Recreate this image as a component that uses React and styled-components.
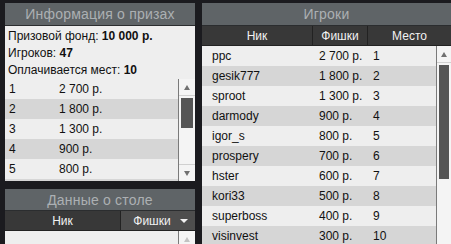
import React from "react";
import styled, { createGlobalStyle } from "styled-components";

const Global = createGlobalStyle`
  html, body { margin: 0; padding: 0; background: #1b1b1f; overflow: hidden; }
  body { font-family: "Liberation Sans", Arial, sans-serif; font-size: 12px; color: #111; }
  * { box-sizing: border-box; }
`;

const Page = styled.div`
  display: flex;
  gap: 7px;
  padding: 3px 0 0 5px;
  width: 451px;
  height: 244px;
  overflow: hidden;
`;

const LeftCol = styled.div`
  width: 190px;
  display: flex;
  flex-direction: column;
  gap: 8px;
  flex-shrink: 0;
  min-height: 0;
`;

const Panel = styled.div`
  display: flex;
  flex-direction: column;
  flex: ${(p) => (p.$grow ? "1 1 0" : "none")};
  min-width: 0;
  min-height: 0;
`;

const Header = styled.div`
  flex: none;
  height: ${(p) => p.$h || 23}px;
  background: #5f6467;
  color: #acb0b3;
  font-size: 14px;
  display: flex;
  align-items: center;
  justify-content: center;
  border-bottom: 1px solid #2b2d2f;
  letter-spacing: 0.2px;
`;

const Info = styled.div`
  flex: none;
  background: #eeeeee;
  padding: 2px 0 0 3px;
`;

const InfoLine = styled.div`
  height: 17px;
  line-height: 17px;
  b { font-weight: bold; }
`;

const ListArea = styled.div`
  display: flex;
  height: ${(p) => (p.$h ? p.$h + "px" : "auto")};
  flex: ${(p) => (p.$grow ? "1 1 0" : "none")};
  min-height: 0;
  background: #eeeeee;
  overflow: hidden;
`;

const Rows = styled.div`
  flex: 1;
  display: flex;
  flex-direction: column;
`;

const Row = styled.div`
  flex: none;
  display: grid;
  grid-template-columns: ${(p) => p.$cols};
  height: ${(p) => p.$h || 20}px;
  align-items: center;
  background: ${(p) => (p.$alt ? "#d6d6d6" : "#eeeeee")};
`;

const Cell = styled.div`
  padding-left: ${(p) => p.$pl || 0}px;
  white-space: nowrap;
`;

const Scroll = styled.div`
  width: ${(p) => p.$w}px;
  flex: none;
  border-left: 1px solid #7a7a7a;
  background: #f4f4f4;
  display: flex;
  flex-direction: column;
  align-items: center;
`;

const ArrowBtn = styled.div`
  flex: none;
  width: 100%;
  height: 17px;
  display: flex;
  align-items: center;
  justify-content: center;
  border-${(p) => (p.$down ? "top" : "bottom")}: 1px solid #d0d0d0;
  &::after {
    content: "";
    width: 0;
    height: 0;
    border-left: 3px solid transparent;
    border-right: 3px solid transparent;
    ${(p) => (p.$down ? "border-top" : "border-bottom")}: 5px solid ${(p) => (p.$off ? "#c2c2c2" : "#707070")};
  }
`;

const Track = styled.div`
  flex: 1;
  width: 100%;
  padding: 2px 2px 0 2px;
`;

const Thumb = styled.div`
  height: ${(p) => p.$h}px;
  background: #555555;
`;

const ColHead = styled.div`
  flex: none;
  display: grid;
  grid-template-columns: ${(p) => p.$cols};
  height: 20px;
  background: #383838;
  border-bottom: 1px solid #222;
  color: #f2f2f2;
  font-size: 12px;
`;

const HeadCell = styled.div`
  display: flex;
  align-items: center;
  justify-content: center;
  position: relative;
  background: ${(p) => (p.$active ? "#4e4e4e" : "transparent")};
  border-left: ${(p) => (p.$sep ? "1px solid #222" : "none")};
  padding-right: ${(p) => (p.$active ? 12 : 0)}px;
`;

const SortMark = styled.span`
  position: absolute;
  right: 7px;
  top: 8px;
  width: 0;
  height: 0;
  border-left: 4px solid transparent;
  border-right: 4px solid transparent;
  border-top: 4px solid #f2f2f2;
`;

const prizes = ["2 700 р.", "1 800 р.", "1 300 р.", "900 р.", "800 р."];
const players = [
  ["ppc", "2 700 р.", "1"],
  ["gesik777", "1 800 р.", "2"],
  ["sproot", "1 300 р.", "3"],
  ["darmody", "900 р.", "4"],
  ["igor_s", "800 р.", "5"],
  ["prospery", "700 р.", "6"],
  ["hster", "600 р.", "7"],
  ["kori33", "500 р.", "8"],
  ["superboss", "400 р.", "9"],
  ["visinvest", "300 р.", "10"],
];

export default function App() {
  return (
    <>
      <Global />
      <Page>
        <LeftCol>
          <Panel>
            <Header>Информация о призах</Header>
            <Info>
              <InfoLine>Призовой фонд: <b>10 000 р.</b></InfoLine>
              <InfoLine>Игроков: <b>47</b></InfoLine>
              <InfoLine>Оплачивается мест: <b>10</b></InfoLine>
            </Info>
            <ListArea $h={102}>
              <Rows>
                {prizes.map((p, i) => (
                  <Row key={i} $alt={i % 2 === 1} $cols="54px 1fr">
                    <Cell $pl={4}>{i + 1}</Cell>
                    <Cell>{p}</Cell>
                  </Row>
                ))}
                <Row $alt $h={2} $cols="1fr" />
              </Rows>
              <Scroll $w={17}>
                <ArrowBtn />
                <Track><Thumb $h={30} /></Track>
                <ArrowBtn $down />
              </Scroll>
            </ListArea>
          </Panel>
          <Panel $grow>
            <Header $h={22}>Данные о столе</Header>
            <ColHead $cols="115px 1fr">
              <HeadCell>Ник</HeadCell>
              <HeadCell $sep $active>Фишки<SortMark /></HeadCell>
            </ColHead>
            <ListArea $grow>
              <Rows />
              <Scroll $w={17}>
                <ArrowBtn $off />
              </Scroll>
            </ListArea>
          </Panel>
        </LeftCol>
        <Panel $grow>
          <Header>Игроки</Header>
          <ColHead $cols="110px 55px 1fr">
            <HeadCell>Ник</HeadCell>
            <HeadCell $sep>Фишки</HeadCell>
            <HeadCell $sep>Место</HeadCell>
          </ColHead>
          <ListArea $grow>
            <Rows>
              {players.map((r, i) => (
                <Row key={i} $alt={i % 2 === 1} $cols="110px 55px 1fr">
                  <Cell $pl={10}>{r[0]}</Cell>
                  <Cell $pl={7}>{r[1]}</Cell>
                  <Cell $pl={6}>{r[2]}</Cell>
                </Row>
              ))}
            </Rows>
            <Scroll $w={15}>
              <ArrowBtn />
              <Track><Thumb $h={114} /></Track>
            </Scroll>
          </ListArea>
        </Panel>
      </Page>
    </>
  );
}
